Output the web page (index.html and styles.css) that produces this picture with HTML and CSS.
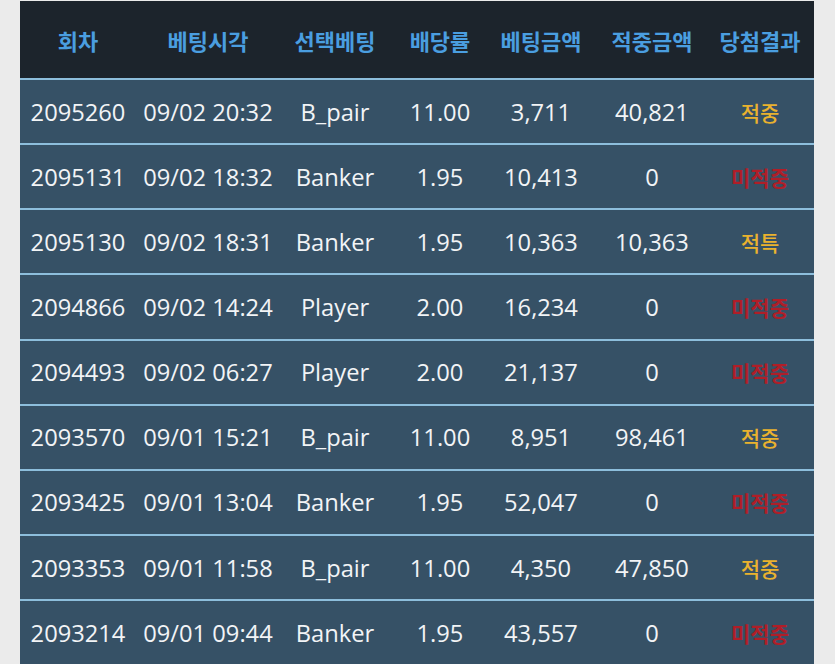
FILE: index.html
```html
<!DOCTYPE html>
<html lang="ko">
<head>
<meta charset="utf-8">
<link rel="stylesheet" href="styles.css">
</head>
<body>
<div class="table">
  <div class="row head">
    <div>회차</div><div>베팅시각</div><div>선택베팅</div><div>배당률</div><div>베팅금액</div><div>적중금액</div><div class="res">당첨결과</div>
  </div>
  <div class="row"><div>2095260</div><div>09/02 20:32</div><div>B_pair</div><div>11.00</div><div>3,711</div><div>40,821</div><div class="res win">적중</div></div>
  <div class="row"><div>2095131</div><div>09/02 18:32</div><div>Banker</div><div>1.95</div><div>10,413</div><div>0</div><div class="res lose">미적중</div></div>
  <div class="row"><div>2095130</div><div>09/02 18:31</div><div>Banker</div><div>1.95</div><div>10,363</div><div>10,363</div><div class="res win">적특</div></div>
  <div class="row"><div>2094866</div><div>09/02 14:24</div><div>Player</div><div>2.00</div><div>16,234</div><div>0</div><div class="res lose">미적중</div></div>
  <div class="row"><div>2094493</div><div>09/02 06:27</div><div>Player</div><div>2.00</div><div>21,137</div><div>0</div><div class="res lose">미적중</div></div>
  <div class="row"><div>2093570</div><div>09/01 15:21</div><div>B_pair</div><div>11.00</div><div>8,951</div><div>98,461</div><div class="res win">적중</div></div>
  <div class="row"><div>2093425</div><div>09/01 13:04</div><div>Banker</div><div>1.95</div><div>52,047</div><div>0</div><div class="res lose">미적중</div></div>
  <div class="row"><div>2093353</div><div>09/01 11:58</div><div>B_pair</div><div>11.00</div><div>4,350</div><div>47,850</div><div class="res win">적중</div></div>
  <div class="row"><div>2093214</div><div>09/01 09:44</div><div>Banker</div><div>1.95</div><div>43,557</div><div>0</div><div class="res lose">미적중</div></div>
</div>
</body>
</html>
```

FILE: styles.css
```css
html, body {
  margin: 0;
  padding: 0;
  background: #ebebeb;
  overflow: hidden;
}
body {
  height: 664px;
  font-family: "Open Sans", "Noto Sans CJK KR", sans-serif;
}
.table {
  margin: 1px 0 0 20px;
  width: 794px;
}
.row {
  display: grid;
  grid-template-columns: 116px 144px 110px 100px 102px 120px 102px;
  height: 63.15px;
  align-items: center;
  background: #365166;
  color: #f2f4f6;
  font-size: 23.7px;
  border-bottom: 2px solid #8dbedc;
  text-align: center;
}
.row.head {
  height: 77px;
  background: #1c242c;
  color: #4a9ee0;
  font-family: "Noto Sans CJK KR", sans-serif;
  font-weight: 700;
  font-size: 22px;
}
.row > div {
  white-space: nowrap;
}
.row > .res {
  padding-right: 6px;
}
.win {
  color: #eab22e;
  font-family: "Noto Sans CJK KR", sans-serif;
  font-weight: 500;
  font-size: 21px;
}
.lose {
  color: #b01e28;
  font-family: "Noto Sans CJK KR", sans-serif;
  font-weight: 700;
  font-size: 21px;
}
```
